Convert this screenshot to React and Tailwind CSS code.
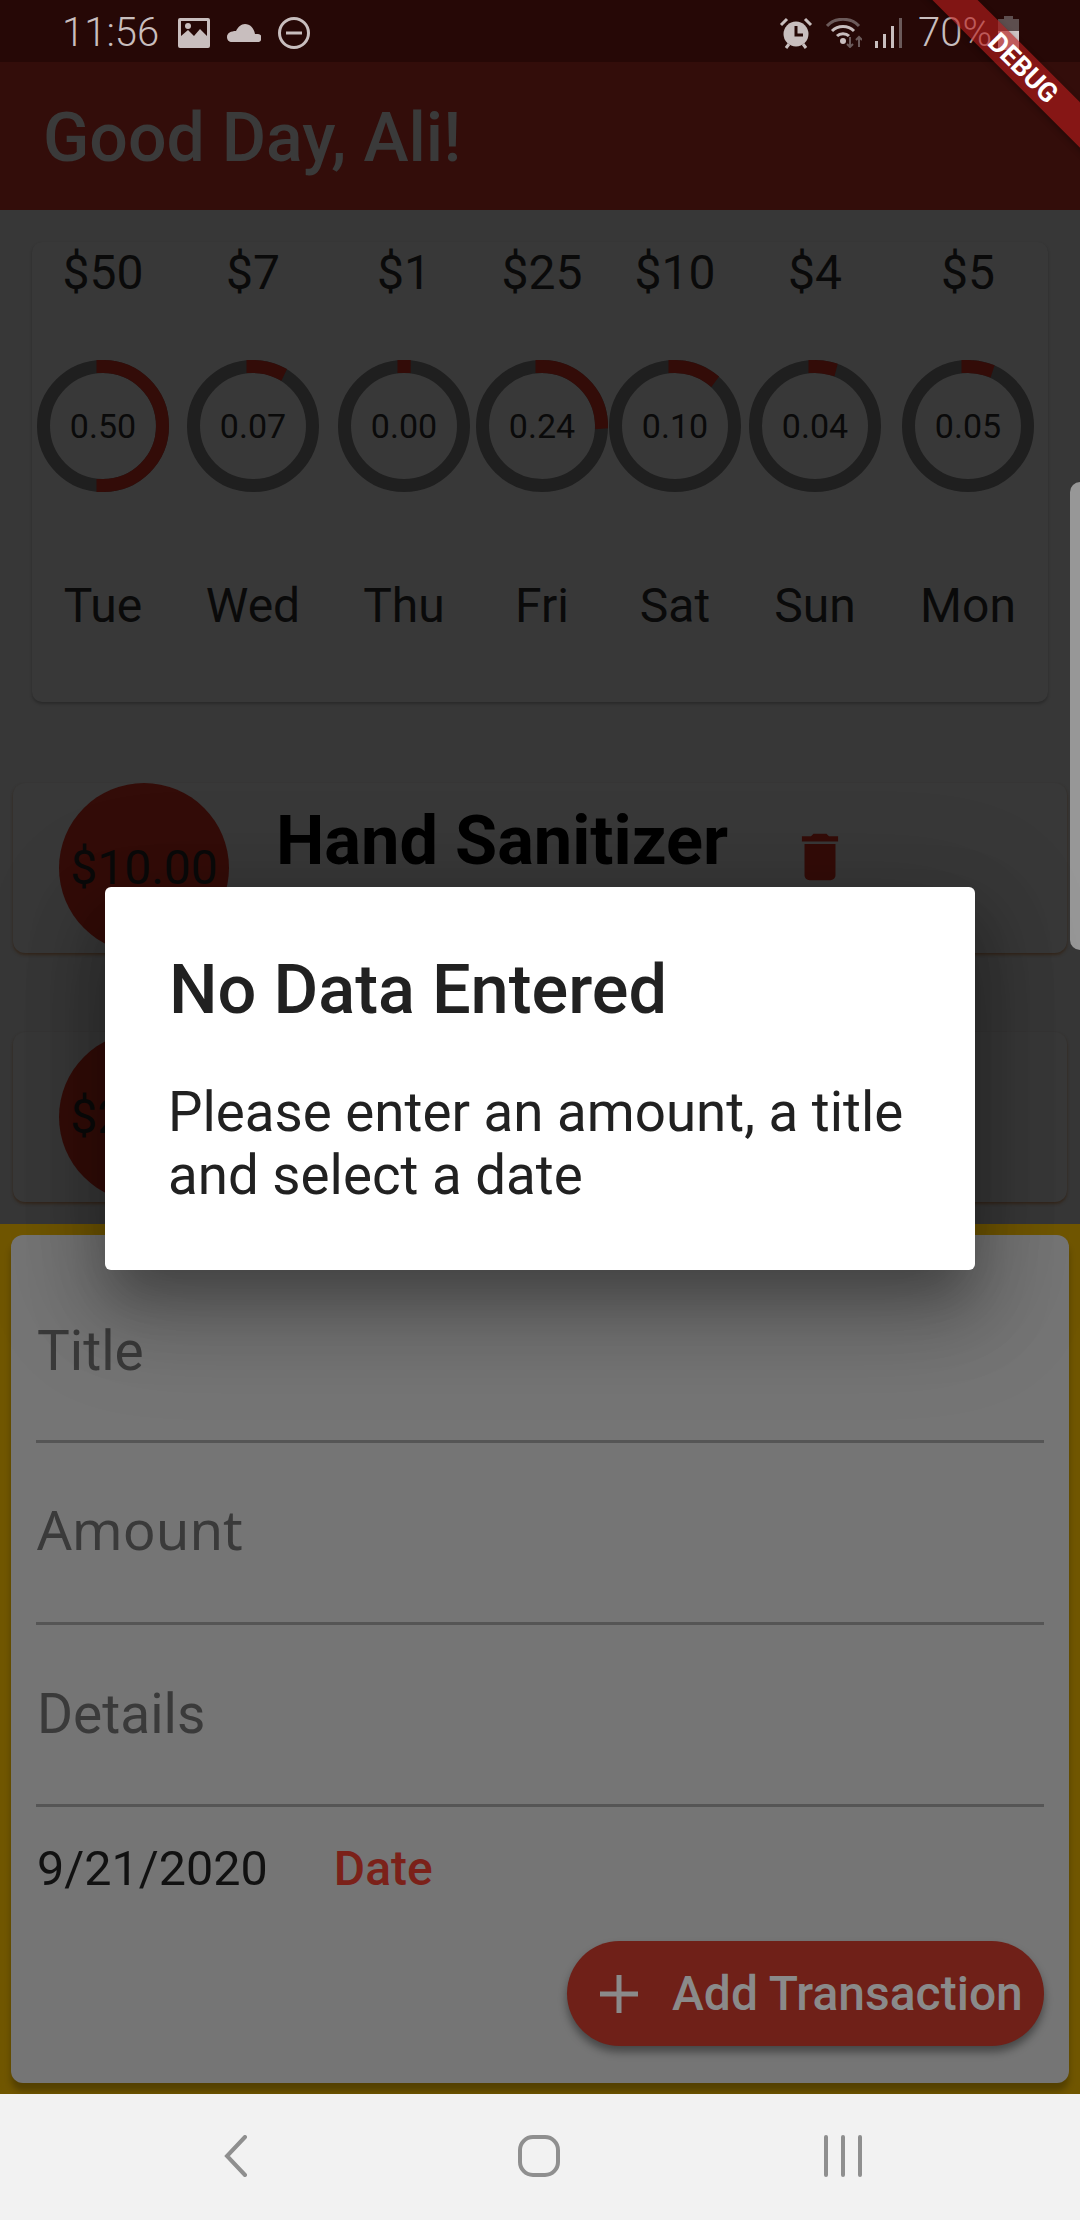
import React from 'react';

const days = [
  { amount: '$50', ratio: 0.5, label: '0.50', day: 'Tue', gap: 'ml-0' },
  { amount: '$7', ratio: 0.07, label: '0.07', day: 'Wed', gap: 'ml-[18px]' },
  { amount: '$1', ratio: 0, label: '0.00', day: 'Thu', gap: 'ml-[19px]' },
  { amount: '$25', ratio: 0.24, label: '0.24', day: 'Fri', gap: 'ml-[6px]' },
  { amount: '$10', ratio: 0.1, label: '0.10', day: 'Sat', gap: 'ml-[1px]' },
  { amount: '$4', ratio: 0.04, label: '0.04', day: 'Sun', gap: 'ml-[8px]' },
  { amount: '$5', ratio: 0.05, label: '0.05', day: 'Mon', gap: 'ml-[21px]' },
];

// progress ring, arc starts at 12 o'clock and has square caps like flutter's indicator
const Ring = ({ ratio }) => {
  const r = 59.5;
  const angle = Math.max(ratio, 0.0005) * 2 * Math.PI;
  const x = 66 + r * Math.sin(angle);
  const y = 66 - r * Math.cos(angle);
  return (
    <svg width="132" height="132" viewBox="0 0 132 132" className="[grid-area:1/1]">
      <circle cx="66" cy="66" r={r} fill="none" stroke="#1f1f1f" strokeWidth="13" />
      <path
        d={`M66 6.5A${r} ${r} 0 ${ratio > 0.5 ? 1 : 0} 1 ${x} ${y}`}
        fill="none"
        stroke="#330c08"
        strokeWidth="13"
        strokeLinecap="square"
      />
    </svg>
  );
};

const DayColumn = ({ item }) => (
  <div className={`flex w-[132px] flex-col items-center ${item.gap}`}>
    <div className="mt-[1px] flex h-[60px] items-center text-[48px] leading-none text-[#0a0a0a]">{item.amount}</div>
    <div className="mt-[57px] grid place-items-center">
      <Ring ratio={item.ratio} />
      <span className="[grid-area:1/1] text-[34px] leading-none text-[#0a0a0a]">{item.label}</span>
    </div>
    <div className="mt-[84px] flex h-[60px] items-center text-[48px] leading-none text-[#0a0a0a]">{item.day}</div>
  </div>
);

const Transaction = ({ amount, title, className }) => (
  <div className={`mx-[13px] flex h-[170px] rounded-[12px] bg-[#383838] pl-[46px] shadow-[0_2px_3px_rgba(50,32,16,0.7)] ${className}`}>
    <div className="flex h-[170px] w-[170px] shrink-0 items-center justify-center rounded-full bg-[#330c08] text-[48px] leading-none text-[#0a0a0a]">
      {amount}
    </div>
    <div className="ml-[47px] mt-[23px] w-[513px] whitespace-nowrap text-[68.5px] font-bold leading-[70px] text-black">{title}</div>
    <svg width="62" height="62" viewBox="0 0 24 24" fill="#330c08" className="mt-[43px]">
      <path d="M6 19c0 1.1.9 2 2 2h8c1.1 0 2-.9 2-2V7H6v12zM19 4h-3.5l-1-1h-5l-1 1H5v2h14V4z" />
    </svg>
  </div>
);

const Field = ({ label, className }) => (
  <div className={`flex h-[182px] items-end border-b-[3px] border-[#555555] leading-[64px] text-[#3a3a3a] ${className}`}>
    {label}
  </div>
);

const StatusLeft = () => (
  <div className="flex items-center">
    <span className="w-[110px] text-[40px] font-light leading-none">11:56</span>
    <svg width="32" height="30" viewBox="0 0 32 30" className="ml-[6px]">
      <path fillRule="evenodd" fill="#c8bebe" d="M2 0h28a2 2 0 0 1 2 2v26a2 2 0 0 1-2 2H2a2 2 0 0 1-2-2V2a2 2 0 0 1 2-2zM3 3v15l7-6 6 6 6-7 7 7V3z" />
      <circle cx="10" cy="8" r="3" fill="#c8bebe" />
    </svg>
    <svg width="34" height="18" viewBox="0 0 34 18" className="ml-[17px]">
      <path fill="#c8bebe" d="M5 18h25a4 4 0 0 0 1-8c-1 0-2 0-3 0C27 4 23 0 18 0c-4 0-7 3-9 7C4 7 0 9 0 13c0 3 2 5 5 5z" />
    </svg>
    <svg width="32" height="32" viewBox="0 0 32 32" className="ml-[17px]">
      <circle cx="16" cy="16" r="14.5" fill="none" stroke="#c8bebe" strokeWidth="3" />
      <path d="M8 16h16" stroke="#c8bebe" strokeWidth="3" />
    </svg>
  </div>
);

const StatusRight = () => (
  <div className="flex items-center">
    <svg width="34" height="32" viewBox="0 0 34 32">
      <circle cx="17" cy="17" r="12.5" fill="#c8bebe" />
      <path d="M17 9v9h7" fill="none" stroke="#260806" strokeWidth="3" />
      <path d="M2 8l6-6M32 8l-6-6M7 31l3-4M27 31l-3-4" stroke="#c8bebe" strokeWidth="3" />
    </svg>
    <svg width="36" height="30" viewBox="0 0 36 30" className="ml-[13px]">
      <path d="M1 8C9 -1 25 -1 33 8" fill="none" stroke="#6b5a5a" strokeWidth="3" />
      <path d="M6 13C12 7 22 7 28 13M11 18C14 15 20 15 23 18" fill="none" stroke="#c8bebe" strokeWidth="3" />
      <circle cx="17" cy="23" r="3" fill="#c8bebe" />
      <path d="M24 19v10M21 26l3 3 3-3M33 29V19M30 22l3-3 3 3" fill="none" stroke="#6b5a5a" strokeWidth="2" />
    </svg>
    <svg width="28" height="30" viewBox="0 0 28 30" className="ml-[13px]">
      <rect x="0" y="23" width="3" height="7" fill="#c8bebe" />
      <rect x="8" y="16" width="3" height="14" fill="#c8bebe" />
      <rect x="16" y="8" width="3" height="22" fill="#c8bebe" />
      <rect x="24" y="0" width="3" height="30" fill="#6b5a5a" />
    </svg>
    <span className="ml-[15px] w-[72px] text-[40px] font-light leading-none">70%</span>
    <svg width="21" height="34" viewBox="0 0 21 34" className="ml-[8px]">
      <path d="M6 0h9v3h6v12H0V3h6z" fill="#5d4e4e" />
      <path d="M0 15h21v19H0z" fill="#cfc5c5" />
    </svg>
  </div>
);

const DebugBanner = () => (
  <div className="absolute right-0 top-0 h-[180px] w-[300px] overflow-hidden">
    <div className="absolute left-[43px] top-[52px] flex h-[32px] w-[400px] rotate-45 items-center justify-center bg-[#b71c1ca0] text-[27px] font-bold leading-none text-white shadow-[0_2px_6px_rgba(0,0,0,0.3)]">
      DEBUG
    </div>
  </div>
);

export default function App() {
  return (
    <div className="relative flex h-[2220px] w-[1080px] flex-col overflow-hidden bg-[#373737] font-['Roboto',sans-serif]">
      {/* Status bar */}
      <div className="flex h-[62px] items-center justify-between bg-[#260806] pl-[62px] pr-[61px] pt-[3px] text-[#c8bebe]">
        <StatusLeft />
        <StatusRight />
      </div>

      {/* App bar */}
      <div className="flex h-[148px] items-center bg-[#330d0a] pl-[43px] pt-[3px] text-[68px] font-medium leading-none text-[#3a3a3a]">
        Good Day, Ali!
      </div>

      {/* Chart */}
      <div className="mx-[32px] mt-[32px] flex h-[460px] rounded-[10px] bg-[#383838] pl-[5px] shadow-[0_2px_3px_rgba(0,0,0,0.25)]">
        {days.map((item) => (
          <DayColumn key={item.day} item={item} />
        ))}
      </div>

      {/* Transactions */}
      <Transaction className="mt-[81px]" amount="$10.00" title="Hand Sanitizer" />
      <Transaction className="mt-[79px]" amount="$25.00" title="" />

      {/* New transaction form */}
      <div className="mt-[22px] flex h-[870px] flex-col bg-[#705600] px-[11px] pb-[11px] pt-[11px]">
        <div className="flex flex-1 flex-col rounded-[12px] bg-[#757575] px-[25px] pt-[26px] shadow-[0_8px_6px_rgba(0,0,0,0.25)]">
          <Field label="Title" className="pb-[57px] pl-[1px] text-[55px]" />
          <Field label="Amount" className="pb-[61px] pl-[1px] font-['Noto_Sans',sans-serif] text-[54.5px]" />
          <Field label="Details" className="pb-[58px] pl-[1px] text-[55px]" />
          <div className="mt-[32px] flex h-[60px] items-center pl-[1px] leading-none">
            <span className="text-[48.5px] text-[#111111]">9/21/2020</span>
            <span className="ml-[66px] text-[48px] font-medium text-[#7b2119]">Date</span>
          </div>
          <div className="mt-[42px] flex justify-end">
            <div className="flex h-[105px] w-[477px] items-center rounded-full bg-[#6f2018] pl-[33px] text-[48px] font-medium leading-none text-[#8a8a8a] shadow-[0_6px_9px_rgba(0,0,0,0.4)]">
              <svg width="38" height="38" viewBox="0 0 38 38">
                <path d="M19 0v38M0 19h38" stroke="#8a8a8a" strokeWidth="5" />
              </svg>
              <span className="ml-[34px]">Add Transaction</span>
            </div>
          </div>
        </div>
      </div>

      {/* Navigation bar */}
      <div className="flex h-[126px] items-start justify-center bg-[#f2f2f2] pl-[6px] pt-[41px]">
        <svg width="24" height="42" viewBox="0 0 24 42" className="mr-[270px]">
          <path d="M21 2L3 21l18 19" fill="none" stroke="#8f8f8f" strokeWidth="4" strokeLinecap="round" />
        </svg>
        <svg width="42" height="42" viewBox="0 0 42 42" className="mr-[264px]">
          <rect x="2" y="2" width="38" height="38" rx="13" fill="none" stroke="#8f8f8f" strokeWidth="4" />
        </svg>
        <svg width="38" height="42" viewBox="0 0 38 42">
          <path d="M2 2v38M19 2v38M36 2v38" stroke="#8f8f8f" strokeWidth="4" strokeLinecap="round" />
        </svg>
      </div>

      {/* Edge panel handle */}
      <div className="absolute right-0 top-[482px] h-[468px] w-[10px] rounded-l-[14px] bg-[#979797]" />

      {/* Alert dialog */}
      <div className="absolute left-[105px] top-[887px] h-[383px] w-[870px] rounded-[6px] bg-white pl-[64px] pt-[68px] text-[#212121] shadow-[0_36px_72px_9px_rgba(0,0,0,0.2),0_27px_114px_20px_rgba(0,0,0,0.14),0_33px_45px_-15px_rgba(0,0,0,0.2)]">
        <div className="text-[68.5px] font-medium leading-[70px]">No Data Entered</div>
        <div className="-ml-[1px] mt-[56px] w-[790px] text-[54.7px] leading-[63px]">
          Please enter an amount, a title
          <br />
          and select a date
        </div>
      </div>

      <DebugBanner />
    </div>
  );
}
